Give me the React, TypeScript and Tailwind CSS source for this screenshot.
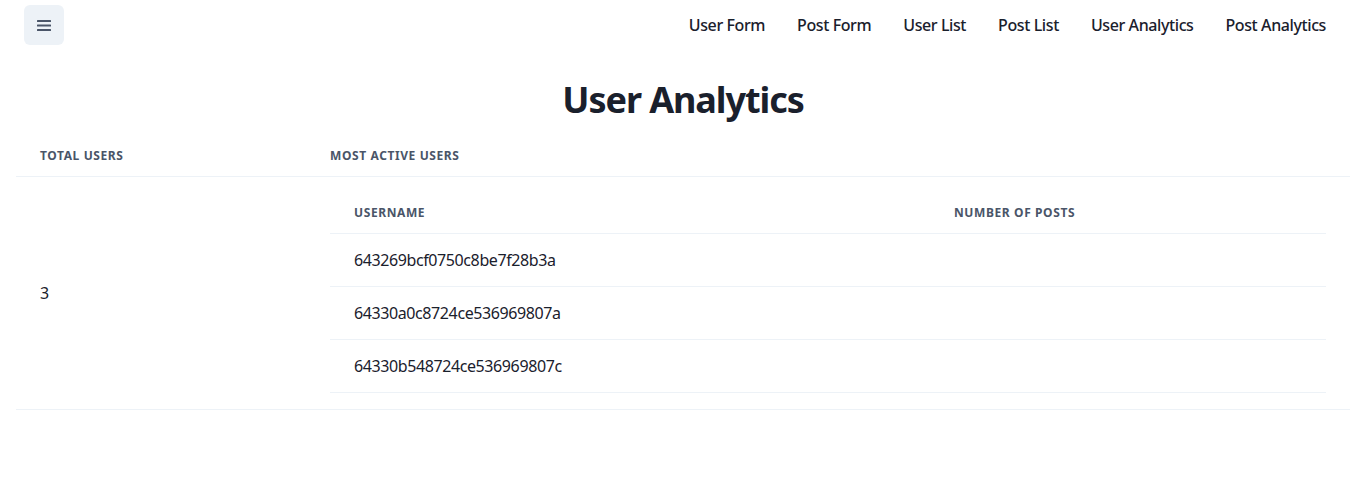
import React from "react";

const NAV_LINKS = [
  "User Form",
  "Post Form",
  "User List",
  "Post List",
  "User Analytics",
  "Post Analytics",
];

const ACTIVE_USERS = [
  "643269bcf0750c8be7f28b3a",
  "64330a0c8724ce536969807a",
  "64330b548724ce536969807c",
];

const thClass =
  "px-6 py-3 text-left text-xs font-bold uppercase tracking-wider leading-4 text-[#4A5568] border-b border-[#EDF2F7]";
const tdClass =
  "px-6 py-4 leading-5 tracking-[-0.025em] border-b border-[#EDF2F7]";

const HamburgerIcon = () => (
  <svg viewBox="0 0 14 11" className="w-[14px] h-[11px]" fill="currentColor">
    <rect x="0" y="0" width="14" height="2" rx="0.5" />
    <rect x="0" y="4.5" width="14" height="2" rx="0.5" />
    <rect x="0" y="9" width="14" height="2" rx="0.5" />
  </svg>
);

export default function App() {
  return (
    <div className="min-h-[500px] bg-white text-[#1A202C] font-['Segoe_UI','Noto_Sans',sans-serif]">
      <header className="h-[50px] px-6 flex items-center justify-between">
        <button className="w-10 h-10 rounded-md bg-[#EDF2F7] flex items-center justify-center text-[#4A5568]">
          <HamburgerIcon />
        </button>
        <nav className="flex">
          {NAV_LINKS.map((link) => (
            <a
              key={link}
              href="#"
              className="px-4 font-medium text-base tracking-[-0.025em]"
            >
              {link}
            </a>
          ))}
        </nav>
      </header>

      <h1 className="mt-7 text-center text-4xl font-bold leading-[1.2] tracking-[-0.03em]">
        User Analytics
      </h1>

      <div className="mx-4 mt-[15px]">
        <table className="w-full border-collapse">
          <thead>
            <tr>
              <th className={`${thClass} w-[290px]`}>Total Users</th>
              <th className={thClass}>Most Active Users</th>
            </tr>
          </thead>
          <tbody>
            <tr>
              <td className={tdClass}>3</td>
              <td className={tdClass}>
                <table className="w-full border-collapse">
                  <thead>
                    <tr>
                      <th className={`${thClass} w-[600px]`}>Username</th>
                      <th className={thClass}>Number of Posts</th>
                    </tr>
                  </thead>
                  <tbody>
                    {ACTIVE_USERS.map((id) => (
                      <tr key={id}>
                        <td className={tdClass}>{id}</td>
                        <td className={tdClass}></td>
                      </tr>
                    ))}
                  </tbody>
                </table>
              </td>
            </tr>
          </tbody>
        </table>
      </div>
    </div>
  );
}
